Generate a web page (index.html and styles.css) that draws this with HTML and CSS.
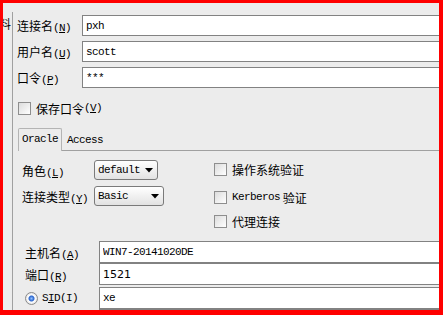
FILE: index.html
```html
<!DOCTYPE html>
<html lang="zh-CN">
<head>
  <meta charset="UTF-8">
  <title>连接</title>
  <link rel="stylesheet" href="styles.css">
</head>
<body>

  <div class="frame">
    <div class="stub"><span>料</span></div>

    <div class="main">
      <div class="field">
        <label>连接名<span class="m">(<u>N</u>)</span></label>
        <input type="text" value="pxh">
      </div>
      <div class="field">
        <label>用户名<span class="m">(<u>U</u>)</span></label>
        <input type="text" value="scott">
      </div>
      <div class="field">
        <label>口令<span class="m">(<u>P</u>)</span></label>
        <input type="text" value="***">
      </div>

      <label class="check save">
        <input type="checkbox">保存口令<span class="m">(<u>V</u>)</span>
      </label>

      <div class="tabs">
        <div class="tab active">Oracle</div>
        <div class="tab">Access</div>
      </div>

      <div class="pane">
        <div class="opts">
          <div class="sel-row">
            <label>角色<span class="m">(<u>L</u>)</span></label>
            <div class="combo role">
              <span>default</span>
              <svg width="8" height="5" viewBox="0 0 8 5"><polygon points="0,0 8,0 4,4.5" fill="#000"/></svg>
            </div>
          </div>
          <div class="sel-row second">
            <label>连接类型<span class="m">(<u>Y</u>)</span></label>
            <div class="combo kind">
              <span>Basic</span>
              <svg width="8" height="5" viewBox="0 0 8 5"><polygon points="0,0 8,0 4,4.5" fill="#000"/></svg>
            </div>
          </div>
        </div>

        <div class="opts-right">
          <label class="check c1"><input type="checkbox">操作系统验证</label>
          <label class="check c2"><input type="checkbox"><span class="m">Kerberos</span>&nbsp;验证</label>
          <label class="check c3"><input type="checkbox">代理连接</label>
        </div>
      </div>

      <div class="conn">
        <div class="field2">
          <label>主机名<span class="m">(<u>A</u>)</span></label>
          <input type="text" value="WIN7-20141020DE">
        </div>
        <div class="field2">
          <label>端口<span class="m">(<u>R</u>)</span></label>
          <input type="text" class="num" value="1521">
        </div>
        <div class="field2 gap">
          <label class="radio"><input type="radio" checked><span class="m">S<u>I</u>D(I)</span></label>
          <input type="text" value="xe">
        </div>
        <div class="field2">
          <label></label>
          <input type="text" value="">
        </div>
      </div>
    </div>
  </div>

</body>
</html>
```

FILE: styles.css
```css
body {
  margin: 0;
  font-family: "Noto Sans CJK SC", sans-serif;
  font-size: 12px;
  color: #000;
}

.m {
  font-family: "Liberation Mono", monospace;
  font-size: 11px;
  letter-spacing: -0.6px;
}

.frame {
  width: 443px;
  height: 315px;
  box-sizing: border-box;
  border-style: solid;
  border-color: #ff0000;
  border-width: 3px 4px 5px 3px;
  background: #ececec;
  display: flex;
  overflow: hidden;
}

.stub {
  flex: none;
  width: 9px;
  overflow: hidden;
  padding-top: 13px;
  line-height: 16px;
}

.stub span {
  display: block;
  margin-left: -4px;
  white-space: nowrap;
}

.main {
  flex: none;
  width: 520px;
  margin-top: 9px;
  border-left: 1px solid #a0a0a0;
  padding-left: 4px;
}

.field {
  display: flex;
  align-items: center;
  height: 21px;
  margin-top: 5px;
}

.field:first-child {
  margin-top: 3px;
}

.field label {
  flex: none;
  width: 65px;
  white-space: nowrap;
}

.field > input,
.field2 > input {
  flex: 1;
  min-width: 0;
  height: 21px;
  box-sizing: border-box;
  margin: 0;
  padding: 0 0 0 3px;
  border: 1px solid #828282;
  border-right: 0;
  background: #fff;
  font-family: "Liberation Mono", monospace;
  font-size: 11px;
  letter-spacing: -0.6px;
  color: #000;
  outline: none;
}

.field2 > input.num {
  font-family: "DejaVu Sans", sans-serif;
  font-size: 11px;
  letter-spacing: 0;
}

.check {
  display: flex;
  align-items: center;
  height: 16px;
  white-space: nowrap;
}

.check input {
  appearance: none;
  flex: none;
  width: 13px;
  height: 13px;
  box-sizing: border-box;
  margin: 0 5px 0 0;
  border: 1px solid #8e8e8e;
  background: linear-gradient(135deg, #dcdcdc, #ffffff);
}

.save {
  margin-top: 12px;
  margin-left: 1px;
}

.tabs {
  display: flex;
  height: 22px;
  margin-top: 12px;
  margin-left: 1px;
  border-bottom: 1px solid #a0a0a0;
}

.tab {
  align-self: flex-start;
  padding: 2px 4px 0 5px;
  line-height: 21px;
  font-family: "Liberation Mono", monospace;
  font-size: 11px;
  letter-spacing: -0.6px;
}

.tab.active {
  height: 23px;
  box-sizing: border-box;
  padding: 0 3px;
  border: 1px solid #b4b4b4;
  border-bottom: 0;
  border-radius: 2px 2px 0 0;
  background: #ececec;
}

.pane {
  display: flex;
  padding-left: 5px;
}

.opts {
  flex: none;
  width: 192px;
}

.sel-row {
  display: flex;
  align-items: center;
  height: 20px;
  margin-top: 9px;
}

.sel-row.second {
  margin-top: 6px;
}

.sel-row label {
  flex: none;
  width: 72px;
  white-space: nowrap;
}

.combo {
  display: flex;
  align-items: center;
  justify-content: space-between;
  height: 20px;
  box-sizing: border-box;
  padding: 0 4px 0 3px;
  border: 1px solid #7a7a7a;
  border-radius: 3px;
  background: linear-gradient(#ffffff, #e2e2e2);
  font-family: "Liberation Mono", monospace;
  font-size: 11px;
  letter-spacing: -0.6px;
}

.combo.role {
  width: 64px;
}

.combo.kind {
  width: 70px;
}

.opts-right .c1 {
  margin-top: 10px;
}

.opts-right .c2 {
  margin-top: 12px;
}

.opts-right .c3 {
  margin-top: 8px;
}

.conn {
  margin-top: 12px;
  padding-left: 8px;
}

.field2 {
  display: flex;
  align-items: center;
  height: 22px;
}

.field2.gap {
  margin-top: 2px;
}

.field2 > input {
  height: 22px;
}

.field2 label {
  flex: none;
  width: 74px;
  white-space: nowrap;
}

.radio {
  display: flex;
  align-items: center;
}

.radio input {
  appearance: none;
  flex: none;
  width: 13px;
  height: 13px;
  margin: 0 4px 0 0;
  border: 1px solid #8a8a8a;
  border-radius: 50%;
  box-sizing: border-box;
  background: radial-gradient(circle, #8fc0ff 0, #2a64cc 2.5px, #ffffff 3.5px, #e0e0e0 6px);
}
```
